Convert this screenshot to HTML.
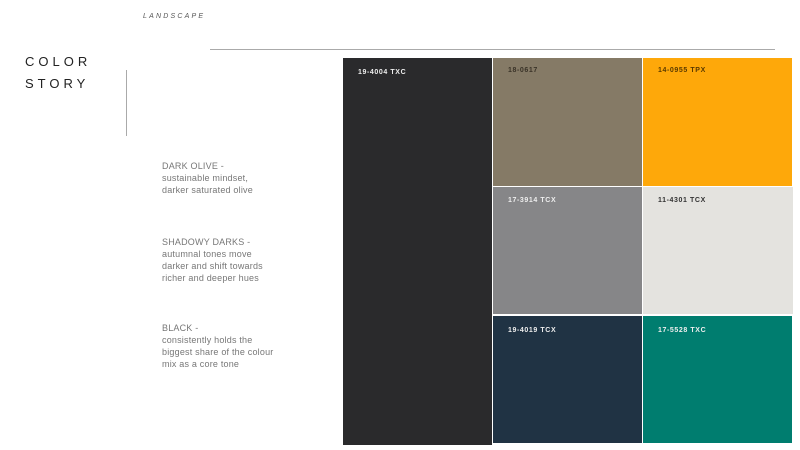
<!DOCTYPE html>
<html><head><meta charset="utf-8"><style>
body{margin:0;width:800px;height:450px;background:#fff;position:relative;overflow:hidden;font-family:"Liberation Sans",sans-serif}
.a{position:absolute}
.sw{position:absolute;font-size:7px;font-weight:bold;letter-spacing:.6px}
.sw span{position:absolute;left:15px;top:11px}
.t{position:absolute;left:162px;font-size:9px;line-height:12px;color:#777;letter-spacing:.2px}
</style></head><body>
<div class="a" style="left:143px;top:13px;font-size:7px;font-style:italic;letter-spacing:2.2px;color:#555">LANDSCAPE</div>
<div class="a" style="left:210px;top:49px;width:565px;height:1px;background:#aaa"></div>
<div class="a" style="left:25px;top:51px;font-size:13px;letter-spacing:4px;line-height:22px;color:#222">COLOR<br>STORY</div>
<div class="a" style="left:126px;top:70px;width:1px;height:66px;background:#aaa"></div>
<div class="t" style="top:160px">DARK OLIVE -<br>sustainable mindset,<br>darker saturated olive</div>
<div class="t" style="top:236px">SHADOWY DARKS -<br>autumnal tones move<br>darker and shift towards<br>richer and deeper hues</div>
<div class="t" style="top:322px">BLACK -<br>consistently holds the<br>biggest share of the colour<br>mix as a core tone</div>
<div class="sw" style="left:343px;top:58px;width:149px;height:387px;background:#2a2a2c;color:#eee"><span>19-4004 TXC</span></div>
<div class="sw" style="left:493px;top:58px;width:149px;height:128px;background:#857a66;color:#3a3328"><span style="top:9px">18-0617</span></div>
<div class="sw" style="left:643px;top:58px;width:149px;height:128px;background:#fea80a;color:#5a3a00"><span style="top:9px">14-0955 TPX</span></div>
<div class="sw" style="left:493px;top:187px;width:149px;height:127px;background:#868688;color:#eee"><span style="top:10px">17-3914 TCX</span></div>
<div class="sw" style="left:643px;top:187px;width:150px;height:127px;background:#e4e3df;color:#333"><span style="top:10px">11-4301 TCX</span></div>
<div class="sw" style="left:493px;top:316px;width:149px;height:127px;background:#203344;color:#eee"><span style="top:11px">19-4019 TCX</span></div>
<div class="sw" style="left:643px;top:316px;width:149px;height:127px;background:#007d6f;color:#eee"><span style="top:11px">17-5528 TXC</span></div>
</body></html>
